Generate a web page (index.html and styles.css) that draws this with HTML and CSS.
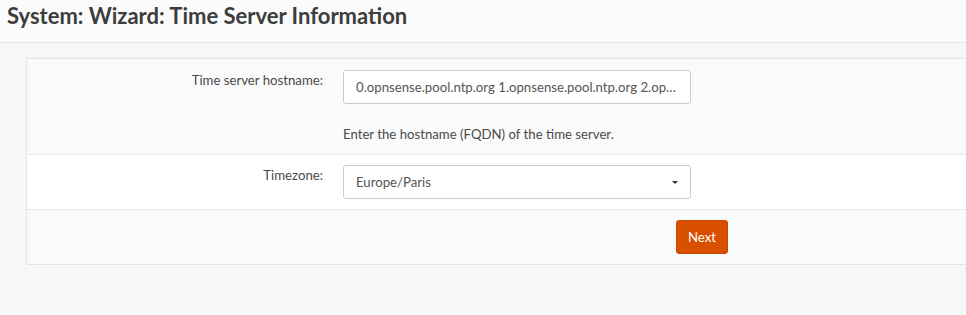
FILE: index.html
```html
<!DOCTYPE html>
<html lang="en">
<head>
    <meta charset="UTF-8">
    <title>System: Wizard: Time Server Information</title>
    <link rel="stylesheet" href="styles.css">
</head>
<body>

    <div class="page-head">
        <h1>System: Wizard: Time Server Information</h1>
    </div>

    <div class="page-content">
        <div class="wizard-card">
            <div class="wizard-row striped">
                <div class="wizard-label">Time server hostname:</div>
                <div class="wizard-field">
                    <input type="text" class="form-control" value="0.opnsense.pool.ntp.org 1.opnsense.pool.ntp.org 2.opnsense.pool.ntp.org 3.opnsense.pool.ntp.org">
                    <div class="help-block">Enter the hostname (FQDN) of the time server.</div>
                </div>
            </div>

            <div class="wizard-row">
                <div class="wizard-label">Timezone:</div>
                <div class="wizard-field">
                    <!-- dropdown drawn as a button, caret on the right -->
                    <div class="form-control select-box">
                        <span>Europe/Paris</span>
                        <span class="caret"></span>
                    </div>
                </div>
            </div>

            <div class="wizard-row striped">
                <div class="wizard-label"></div>
                <div class="wizard-field">
                    <button type="button" class="btn-next">Next</button>
                </div>
            </div>
        </div>
    </div>

</body>
</html>
```

FILE: styles.css
```css
/* --- General Page --- */
body {
    margin: 0;
    font-family: "Lato", "Noto Sans", sans-serif;
    font-size: 13.2px;
    line-height: 20px;
    color: #444;
    background-color: #f7f7f7;
    overflow: hidden;
}

/* --- Page Header --- */
.page-head {
    background-color: #fbfbfb;
    border-bottom: 1px solid #e5e5e5;
    height: 42px;
    padding: 0 7px;
}

.page-head h1 {
    margin: 0;
    font-size: 22px;
    line-height: 32px;
    font-weight: 700;
    color: #3d3d3d;
}

/* --- Wizard Card --- */
.page-content {
    padding: 15px 0 0 26px;
}

.wizard-card {
    width: 1100px;
    background-color: #ffffff;
    border: 1px solid #e3e3e3;
}

.wizard-row {
    display: grid;
    grid-template-columns: 306px 1fr;
    border-top: 1px solid #e9e9e9;
    padding: 10px 0;
}

.wizard-row:first-child {
    border-top: none;
    padding-top: 11px;
}

.wizard-row.striped {
    background-color: #fafafa;
}

.wizard-label {
    text-align: right;
    padding-right: 10px;
    color: #4a4a4a;
}

.wizard-field {
    padding-left: 10px;
}

/* --- Inputs --- */
.form-control {
    box-sizing: border-box;
    display: block;
    width: 348px;
    height: 34px;
    padding: 6px 12px;
    font-family: inherit;
    font-size: 13.2px;
    line-height: 20px;
    color: #555;
    background-color: #ffffff;
    border: 1px solid #cccccc;
    border-radius: 3px;
    text-overflow: ellipsis;
}

.help-block {
    margin-top: 20px;
    color: #4a4a4a;
}

.select-box {
    display: flex;
    align-items: center;
    justify-content: space-between;
}

.caret {
    width: 0;
    height: 0;
    border-top: 3px solid #333;
    border-left: 3px solid transparent;
    border-right: 3px solid transparent;
}

/* --- Next Button --- */
.btn-next {
    height: 34px;
    padding: 6px 11px;
    margin-left: 333px;
    font-family: inherit;
    font-size: 13.2px;
    line-height: 20px;
    color: #ffffff;
    background-color: #d94f00;
    border: 1px solid #c74800;
    border-radius: 3px;
}
```
